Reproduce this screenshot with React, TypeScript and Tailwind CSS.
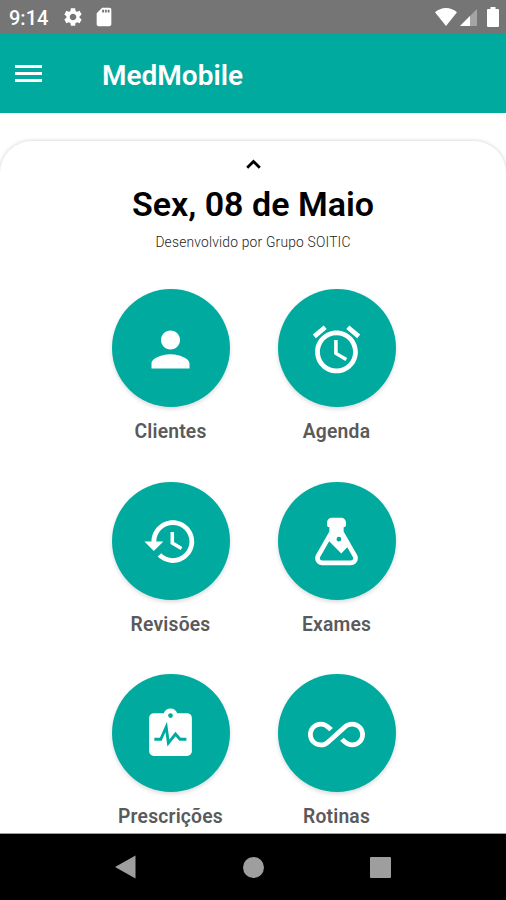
import React from 'react';

interface MenuItem {
  label: string;
  icon: React.ReactNode;
}

const MENU_ITEMS: MenuItem[] = [
  {
    label: 'Clientes',
    icon: <path d="M12 12c2.21 0 4-1.79 4-4s-1.79-4-4-4-4 1.79-4 4 1.79 4 4 4zm0 2c-2.67 0-8 1.34-8 4v2h16v-2c0-2.66-5.33-4-8-4z" />,
  },
  {
    label: 'Agenda',
    icon: <path d="M22 5.72l-4.6-3.86-1.29 1.53 4.6 3.86L22 5.72zM7.88 3.39L6.6 1.86 2 5.71l1.29 1.53 4.59-3.85zM12.5 8H11v6l4.75 2.85.75-1.23-4-2.37V8zM12 4c-4.97 0-9 4.03-9 9s4.02 9 9 9c4.97 0 9-4.03 9-9s-4.03-9-9-9zm0 16c-3.87 0-7-3.13-7-7s3.13-7 7-7 7 3.13 7 7-3.13 7-7 7z" />,
  },
  {
    label: 'Revisões',
    icon: <path d="M13 3c-4.97 0-9 4.03-9 9H1l3.89 3.89.07.14L9 12H6c0-3.87 3.13-7 7-7s7 3.13 7 7-3.13 7-7 7c-1.93 0-3.68-.79-4.94-2.06l-1.42 1.42C8.27 19.99 10.51 21 13 21c4.97 0 9-4.03 9-9s-4.03-9-9-9zm-1 5v5l4.28 2.54.72-1.21-3.5-2.08V8H12z" />,
  },
  {
    label: 'Exames',
    icon: <path d="M6 22A3 3 0 0 1 3 19C3 18.4 3.18 17.84 3.5 17.37L9 7.81V6A1 1 0 0 1 8 5V4A2 2 0 0 1 10 2H14A2 2 0 0 1 16 4V5A1 1 0 0 1 15 6V7.81L20.5 17.37C20.82 17.84 21 18.4 21 19A3 3 0 0 1 18 22H6M5 19A1 1 0 0 0 6 20H18A1 1 0 0 0 19 19C19 18.79 18.93 18.59 18.82 18.43L16.53 14.47L14 17L8.93 11.93L5.18 18.43C5.07 18.59 5 18.79 5 19M13 10A1 1 0 0 0 12 11A1 1 0 0 0 13 12A1 1 0 0 0 14 11A1 1 0 0 0 13 10Z" />,
  },
  {
    label: 'Prescrições',
    icon: (
      <>
        <path d="M19 3h-4.18C14.4 1.84 13.3 1 12 1s-2.4.84-2.82 2H5a2 2 0 0 0-2 2v14a2 2 0 0 0 2 2h14a2 2 0 0 0 2-2V5a2 2 0 0 0-2-2zm-7 0a1 1 0 1 1 0 2 1 1 0 0 1 0-2z" />
        <path d="M5.2 14h2.7l2.3-5.2.9 6.8 3-3.8 1.9 2.2h2.7" fill="none" stroke="#00aa9f" strokeWidth="1.2" />
      </>
    ),
  },
  {
    label: 'Rotinas',
    icon: <path d="M18.6 6.62c-1.44 0-2.8.56-3.77 1.53L12 10.66 10.48 12h.01L7.8 14.39c-.64.64-1.49.99-2.4.99-1.87 0-3.39-1.51-3.39-3.38S3.53 8.62 5.4 8.62c.91 0 1.76.35 2.44 1.03l1.13 1 1.51-1.34L9.22 8.2C8.2 7.18 6.84 6.62 5.4 6.62 2.42 6.62 0 9.04 0 12s2.42 5.38 5.4 5.38c1.44 0 2.8-.56 3.77-1.53l2.83-2.5.01.01L13.52 12h-.01l2.69-2.39c.64-.64 1.49-.99 2.4-.99 1.87 0 3.39 1.51 3.39 3.38s-1.52 3.38-3.39 3.38c-.9 0-1.76-.35-2.44-1.03l-1.14-1.01-1.51 1.34 1.27 1.12c1.02 1.01 2.37 1.57 3.82 1.57 2.98 0 5.4-2.41 5.4-5.38s-2.42-5.37-5.4-5.37z" />,
  },
];

const StatusBar: React.FC = () => (
  <div className="flex h-[34px] shrink-0 items-center bg-[#757575] pl-[9px] pr-[7px] text-white">
    <span className="mt-px w-[53px] text-[20px] font-medium leading-none">9:14</span>
    <svg className="size-[22px]" viewBox="0 0 24 24" fill="currentColor">
      <path d="M19.14 12.94c.04-.3.06-.61.06-.94 0-.32-.02-.64-.07-.94l2.03-1.58c.18-.14.23-.41.12-.61l-1.92-3.32c-.12-.22-.37-.29-.59-.22l-2.39.96c-.5-.38-1.03-.7-1.62-.94l-.36-2.54c-.04-.24-.24-.41-.48-.41h-3.84c-.24 0-.43.17-.47.41l-.36 2.54c-.59.24-1.13.57-1.62.94l-2.39-.96c-.22-.08-.47 0-.59.22L2.74 8.87c-.12.21-.08.47.12.61l2.03 1.58c-.05.3-.09.63-.09.94s.02.64.07.94l-2.03 1.58c-.18.14-.23.41-.12.61l1.92 3.32c.12.22.37.29.59.22l2.39-.96c.5.38 1.03.7 1.62.94l.36 2.54c.05.24.24.41.48.41h3.84c.24 0 .44-.17.47-.41l.36-2.54c.59-.24 1.13-.56 1.62-.94l2.39.96c.22.08.47 0 .59-.22l1.92-3.32c.12-.22.07-.47-.12-.61l-2.01-1.58zM12 15.6c-1.98 0-3.6-1.62-3.6-3.6s1.62-3.6 3.6-3.6 3.6 1.62 3.6 3.6-1.62 3.6-3.6 3.6z" />
    </svg>
    <svg className="ml-[9px] size-[22px]" viewBox="0 0 24 24" fill="currentColor">
      <path d="M18 2h-8L4 8v12c0 1.1.9 2 2 2h12c1.1 0 2-.9 2-2V4c0-1.1-.9-2-2-2zm-6 5h-2V4h2v3zm3 0h-2V4h2v3zm3 0h-2V4h2v3z" />
    </svg>
    <div className="ml-auto flex items-center">
      <svg className="h-[18px] w-[22px]" viewBox="0 0 22 18" fill="currentColor">
        <path d="M11 18L0 4.3C3 1.6 6.8 0 11 0s8 1.6 11 4.3z" />
      </svg>
      <svg className="ml-[3px] h-[17px] w-[17px]" viewBox="0 0 17 17" fill="currentColor">
        <path d="M0 17L17 0v17z" opacity=".35" />
        <path d="M0 17l10-10v10z" />
      </svg>
      <svg className="ml-[10px] h-5 w-3" viewBox="0 0 12 20" fill="currentColor">
        <path d="M3.5 0h5v2H11a1 1 0 0 1 1 1v16a1 1 0 0 1-1 1H1a1 1 0 0 1-1-1V3a1 1 0 0 1 1-1h2.5z" />
      </svg>
    </div>
  </div>
);

const MenuButton: React.FC<MenuItem> = ({ label, icon }) => (
  <button className="flex w-[118px] flex-col items-center">
    <span className="flex size-[118px] items-center justify-center rounded-full bg-[#00aa9f] pt-[2px] text-white shadow-[0_2px_4px_rgba(0,0,0,0.15)]">
      <svg className="size-[57px]" viewBox="0 0 24 24" fill="currentColor">
        {icon}
      </svg>
    </span>
    <span className="mt-[13px] whitespace-nowrap text-[19.3px] font-semibold leading-6 tracking-[0.2px] text-[#5a5a5a]">{label}</span>
  </button>
);

const App: React.FC = () => {
  return (
    <div className="flex h-[900px] w-[506px] flex-col overflow-hidden bg-white font-['Roboto',sans-serif]">
      <StatusBar />

      <header className="flex h-[79px] shrink-0 items-center bg-[#00aa9f] pl-[15px] text-white">
        <button className="flex w-[27px] flex-col gap-[4px]" aria-label="Menu">
          <span className="h-[3px] w-full bg-white" />
          <span className="h-[3px] w-full bg-white" />
          <span className="h-[3px] w-full bg-white" />
        </button>
        <h1 className="ml-[60px] mt-[4px] text-[28px] font-semibold leading-none">MedMobile</h1>
      </header>

      <main className="flex min-h-0 flex-1 flex-col overflow-hidden pt-[28px]">
        <section className="flex h-[740px] shrink-0 flex-col items-center rounded-t-[32px] bg-white shadow-[0_0_4px_rgba(0,0,0,0.2)]">
          <svg className="mt-[18px] h-[10px] w-[15px]" viewBox="0 0 15 10" fill="none" stroke="#000" strokeWidth="2.8">
            <path d="M1.2 8.8L7.5 2.5l6.3 6.3" />
          </svg>
          <h2 className="mt-[14px] text-[34px] font-semibold leading-[42px] text-black">Sex, 08 de Maio</h2>
          <p className="mt-[9px] text-[13.8px] font-light leading-4 tracking-[0.2px] text-[#222222]">Desenvolvido por Grupo SOITIC</p>

          <div className="mt-[39px] grid grid-cols-2 gap-x-[48px] gap-y-[37.5px] pl-px">
            {MENU_ITEMS.map((item) => (
              <MenuButton key={item.label} {...item} />
            ))}
          </div>
        </section>
      </main>

      {/* Android navigation bar */}
      <nav className="flex h-[67px] shrink-0 items-center justify-between border-t border-[#9e9e9e] bg-black pl-[115px] pr-[115px] text-[#9e9e9e]">
        <svg className="h-6 w-[21px]" viewBox="0 0 21 24" fill="currentColor">
          <path d="M20.5.5v23L0 12z" />
        </svg>
        <span className="size-[21px] rounded-full bg-[#9e9e9e]" />
        <span className="size-[21px] rounded-[1px] bg-[#9e9e9e]" />
      </nav>
    </div>
  );
};

export default App;
